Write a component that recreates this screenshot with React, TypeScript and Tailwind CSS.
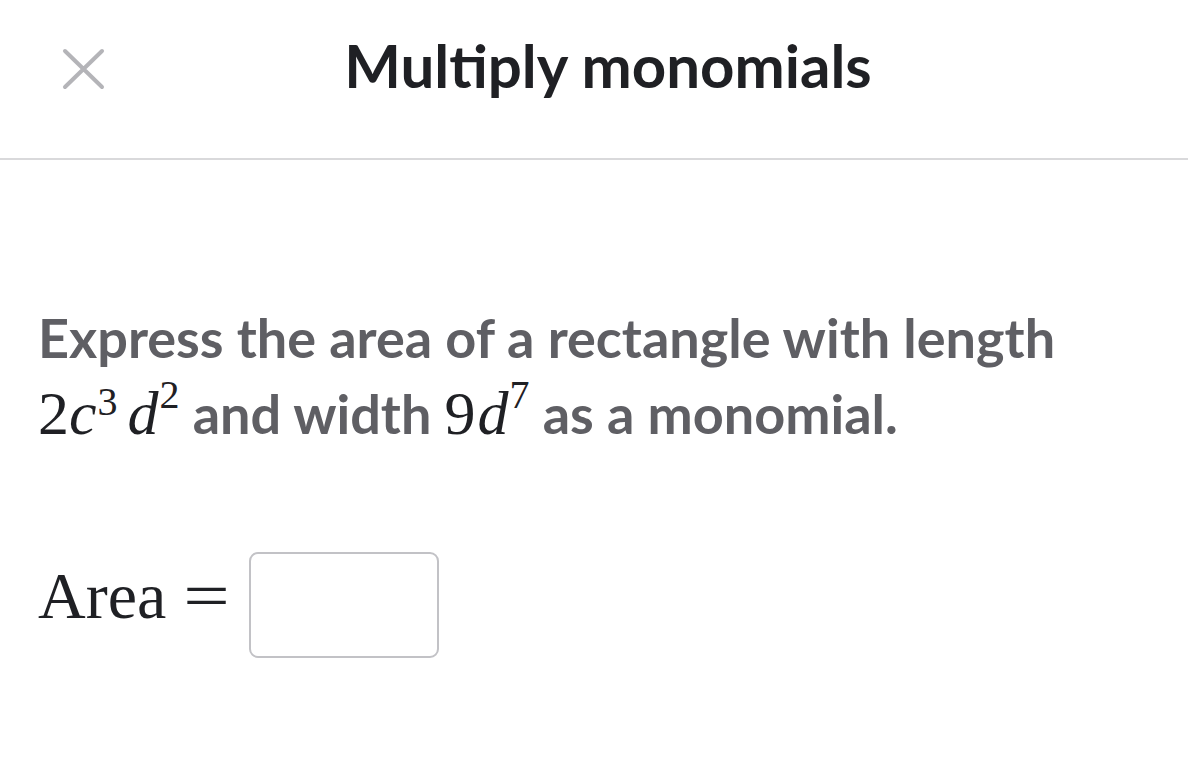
import React from "react";

const serif = { fontFamily: '"Liberation Serif", "DejaVu Serif", serif' };

function Sup({ children, high }: { children: React.ReactNode; high?: boolean }) {
  return (
    <sup className={"text-[40px] leading-none relative align-baseline ml-[1px] " + (high ? "-top-[26px]" : "-top-[19px]")}>
      {children}
    </sup>
  );
}

export default function App() {
  return (
    <div className="w-[1188px] h-[760px] bg-white overflow-hidden" style={{ fontFamily: 'Lato, "Noto Sans", sans-serif' }}>
      <header className="h-[160px] grid grid-cols-[1fr_auto_1fr] items-start border-b-2 border-[#d9d9db]">
        <div className="pl-[61px] pt-[48px]">
          <svg width="45" height="42" viewBox="0 0 45 42" fill="none">
            <path d="M4 3 L41 39 M41 3 L4 39" stroke="#b4b4b8" strokeWidth="4" strokeLinecap="round" />
          </svg>
        </div>
        <h1 className="pl-[28px] pt-[35px] text-[60px] font-bold text-[#1f2024] leading-none">Multiply monomials</h1>
        <div />
      </header>
      <main className="px-[38px] pt-[140px]">
        <p className="text-[54px] font-bold text-[#5f5f64] leading-[76px]">
          Express the area of a rectangle with length
          <br />
          <span className="text-[#1f2024] font-normal text-[62px] leading-none" style={serif}>
            2<i>c</i>
            <Sup>3</Sup>
            <i className="ml-[10px]">d</i>
            <Sup high>2</Sup>
          </span>{" "}
          and width{" "}
          <span className="text-[#1f2024] font-normal text-[62px] leading-none" style={serif}>
            9<i className="ml-[2px]">d</i>
            <Sup high>7</Sup>
          </span>{" "}
          as a monomial.
        </p>
        <div className="flex items-center mt-[100px]">
          <span className="mb-[18px] text-[66px] text-[#1f2024] leading-none" style={serif}>Area</span>
          <span className="mb-[18px] ml-[22px] text-[66px] text-[#1f2024] leading-none scale-x-125" style={serif}>=</span>
          <div className="ml-[24px] w-[190px] h-[106px] border-2 border-[#c2c2c6] rounded-[9px]" />
        </div>
      </main>
    </div>
  );
}
